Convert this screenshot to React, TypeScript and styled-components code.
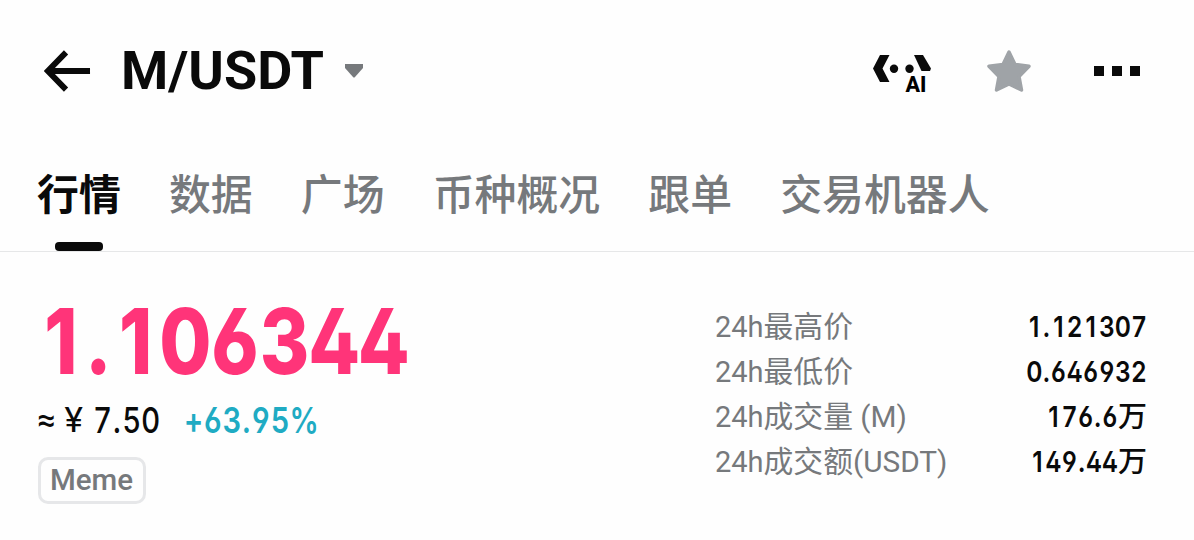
import styled, { createGlobalStyle } from 'styled-components';

const tabs = ['行情', '数据', '广场', '币种概况', '跟单', '交易机器人'];

const stats = [
    { prefix: '24h', name: '最高价', suffix: '', value: '1.121307', unit: '' },
    { prefix: '24h', name: '最低价', suffix: '', value: '0.646932', unit: '' },
    { prefix: '24h', name: '成交量', suffix: ' (M)', value: '176.6', unit: '万' },
    { prefix: '24h', name: '成交额', suffix: '(USDT)', value: '149.44', unit: '万' },
];

const App = () => {
    return (
        <Page>
            <GlobalStyle />
            <Header>
                <BackIcon viewBox="0 0 48 42">
                    <path d="M22.5 2 L4 21 L22.5 40 M4 21 H47" fill="none" stroke="#0a0a0a" strokeWidth="6" />
                </BackIcon>
                <Pair>M/USDT</Pair>
                <CaretIcon viewBox="0 0 18 14">
                    <path d="M0 0 H18 V4 L10 13 Q9 14 8 13 L0 4 Z" fill="#76797c" />
                </CaretIcon>
                <Actions>
                    <AiIcon viewBox="0 0 58 40">
                        <path d="M7 0 H16.5 L9.5 13.5 L16.5 27 H7 L0 13.5 Z" fill="#0a0a0a" />
                        <path d="M41 0 H50 L58 13.5 L57 16 H48.5 Z" fill="#0a0a0a" />
                        <circle cx="21" cy="13.7" r="4.2" fill="#0a0a0a" />
                        <circle cx="36.5" cy="13.7" r="4.2" fill="#0a0a0a" />
                        <text x="32.5" y="37" fontSize="21.5" fontWeight="800" fontFamily="Roboto, sans-serif">
                            AI
                        </text>
                    </AiIcon>
                    <StarIcon viewBox="0 0 44 42">
                        <path
                            d="M22 2 L28 14.5 L42 16.3 L32 26.5 L34.5 40 L22 34 L9.5 40 L12 26.5 L2 16.3 L16 14.5 Z"
                            fill="#9fa3a7"
                            stroke="#9fa3a7"
                            strokeWidth="3.5"
                            strokeLinejoin="round"
                        />
                    </StarIcon>
                    <MoreIcon viewBox="0 0 46 10">
                        <path d="M0 0 H10 V10 H0 Z M18 0 H28 V10 H18 Z M36 0 H46 V10 H36 Z" fill="#0a0a0a" />
                    </MoreIcon>
                </Actions>
            </Header>

            <Tabs>
                {tabs.map((tab, index) => (
                    <Tab key={tab} $active={index === 0}>
                        {tab}
                    </Tab>
                ))}
            </Tabs>

            <Summary>
                <PriceColumn>
                    <Price>
                        <Figures value="1.106344" />
                    </Price>
                    <SubPrice>
                        <Approx>≈</Approx>
                        <Yen>¥</Yen>
                        <Fiat>
                            <Figures value="7.50" />
                        </Fiat>
                        <Change>
                            <Figures value="+63.95" />%
                        </Change>
                    </SubPrice>
                    <Tag>Meme</Tag>
                </PriceColumn>
                <Stats>
                    {stats.map((stat) => (
                        <StatRow key={stat.name}>
                            <StatLabel>
                                <Prefix>{stat.prefix}</Prefix>
                                {stat.name}
                                {stat.suffix}
                            </StatLabel>
                            <StatValue>
                                <StatNumber>
                                    <Figures value={stat.value} />
                                </StatNumber>
                                {stat.unit}
                            </StatValue>
                        </StatRow>
                    ))}
                </Stats>
            </Summary>
        </Page>
    );
};

export default App;

// every figure takes the same width, the point about half of it
const Figures = ({ value }: { value: string }) => (
    <>
        {value.split('').map((char, index) => (
            <Figure key={index} $point={char === '.'}>
                {char}
            </Figure>
        ))}
    </>
);

const GlobalStyle = createGlobalStyle`
    body {
        margin: 0;
        background: #fefefe;
        font-family: Roboto, 'Noto Sans CJK SC', sans-serif;
    }
`;

const Page = styled.div`
    width: 1194px;
    height: 540px;
    overflow: hidden;
    color: #0a0a0a;
`;

const Header = styled.header`
    display: flex;
    align-items: center;
    height: 142px;
    padding: 0 54px 0 44px;
    box-sizing: border-box;
`;

const BackIcon = styled.svg`
    width: 47px;
    height: 42px;
`;

const Pair = styled.h1`
    margin: 0 0 0 30px;
    width: 204px;
    font-size: 54px;
    font-weight: 700;
    line-height: 64px;
    white-space: nowrap;
`;

const CaretIcon = styled.svg`
    width: 18px;
    height: 14px;
    margin-left: 20px;
`;

const Actions = styled.div`
    display: flex;
    align-items: center;
    margin-left: auto;
`;

const AiIcon = styled.svg`
    width: 58px;
    height: 40px;
    margin-top: 8px;
    overflow: visible;
`;

const StarIcon = styled.svg`
    width: 44px;
    height: 42px;
    margin-left: 56px;
`;

const MoreIcon = styled.svg`
    width: 46px;
    height: 10px;
    margin-left: 63px;
`;

const Tabs = styled.nav`
    display: flex;
    gap: 48.1px;
    height: 110px;
    padding: 23px 37px 0;
    box-sizing: border-box;
    border-bottom: 1px solid #e6e7e8;
`;

const Tab = styled.div<{ $active: boolean }>`
    display: flex;
    flex-direction: column;
    justify-content: space-between;
    align-items: center;
    color: ${({ $active }) => ($active ? '#0a0a0a' : '#76797c')};
    font-size: 41.9px;
    font-weight: ${({ $active }) => ($active ? 700 : 500)};
    line-height: 62px;

    &::after {
        content: '';
        width: 48px;
        height: 9px;
        border-radius: 4px;
        background: ${({ $active }) => ($active ? '#0a0a0a' : 'transparent')};
    }
`;

const Summary = styled.section`
    display: flex;
    justify-content: space-between;
    padding: 51px 47px 0 37.5px;
`;

const PriceColumn = styled.div`
    display: flex;
    flex-direction: column;
    align-items: flex-start;
`;

const Digits = styled.span`
    display: inline-block;
    font-family: Inter, sans-serif;
    font-feature-settings: 'cv02', 'cv03', 'cv04';
    white-space: nowrap;
`;

const Figure = styled.span<{ $point: boolean }>`
    display: inline-flex;
    justify-content: center;
    width: ${({ $point }) => ($point ? '0.335em' : '0.657em')};
`;

const Price = styled(Digits)`
    margin-left: -2px;
    color: #ff3479;
    font-size: 91px;
    font-weight: 800;
    line-height: 77px;
    transform: scaleX(0.83);
    transform-origin: left;
`;

const SubPrice = styled.div`
    display: flex;
    align-items: center;
    height: 46px;
    margin-top: 17px;
`;

const Approx = styled.span`
    width: 27px;
    font-size: 32px;
    font-weight: 500;
`;

const Yen = styled.span`
    width: 28px;
    font-size: 35px;
`;

const Fiat = styled(Digits)`
    width: 91px;
    font-size: 36px;
    font-weight: 500;
    transform: scaleX(0.81);
    transform-origin: left;
`;

const Change = styled(Digits)`
    color: #1fabc3;
    font-size: 36px;
    font-weight: 600;
    transform: scaleX(0.81);
    transform-origin: left;
`;

const Tag = styled.div`
    margin-top: 14px;
    padding: 0 9.5px;
    border: 3px solid #e6e7e9;
    border-radius: 10px;
    color: #76797c;
    font-size: 29.5px;
    font-weight: 500;
    line-height: 41px;
`;

const Stats = styled.div`
    width: 432px;
    padding-top: 1px;
`;

const StatRow = styled.div`
    display: flex;
    justify-content: space-between;
    height: 45px;
    line-height: 45px;
`;

const StatLabel = styled.span`
    color: #76797c;
    font-size: 29.8px;
    white-space: pre;
`;

const Prefix = styled.span`
    font-size: 29px;
`;

const StatValue = styled.span`
    font-size: 29px;
    font-weight: 500;
`;

const StatNumber = styled(Digits)`
    font-size: 29px;
    font-weight: 600;
    transform: scaleX(0.845);
    transform-origin: right;
`;
